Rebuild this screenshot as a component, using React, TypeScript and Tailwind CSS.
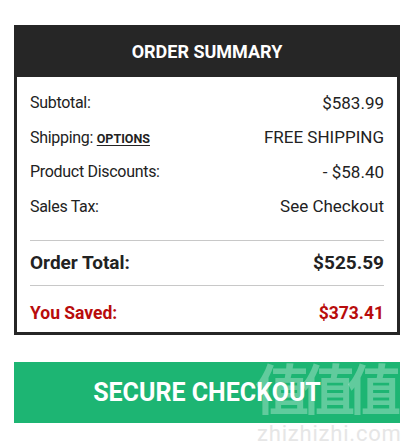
import React from "react";

const Row = ({ left, right }: { left: React.ReactNode; right: React.ReactNode }) => (
  <div className="flex h-[34.5px] items-center justify-between text-[#222]">
    <div className="text-[16px] tracking-[-0.3px]">{left}</div>
    <div className="text-[17px]">{right}</div>
  </div>
);

export default function App() {
  return (
    <div
      className="relative h-[447px] w-[407px] bg-white"
      style={{ fontFamily: "Roboto, 'Noto Sans', sans-serif" }}
    >
      <div className="ml-[14px] w-[386px] pt-[25px]">
        <div className="flex h-[52px] items-center justify-center bg-[#262626]">
          <span className="text-[18px] font-bold text-white">ORDER SUMMARY</span>
        </div>
        <div className="h-[258px] border-x-[3px] border-b-[3px] border-[#262626] px-[13px] pt-[9px]">
          <Row left="Subtotal:" right="$583.99" />
          <Row
            left={
              <span>
                Shipping:{" "}
                <span className="text-[12.5px] font-bold tracking-normal underline underline-offset-2">OPTIONS</span>
              </span>
            }
            right="FREE SHIPPING"
          />
          <Row left="Product Discounts:" right="- $58.40" />
          <Row left="Sales Tax:" right="See Checkout" />
          <div className="mt-[16px] h-px bg-[#c8c8c8]" />
          <div className="flex h-[44px] items-center justify-between text-[19px] font-bold text-[#222]">
            <span>Order Total:</span>
            <span>$525.59</span>
          </div>
          <div className="h-px bg-[#c8c8c8]" />
          <div className="mt-[9px] flex h-[36px] items-center justify-between text-[17.5px] font-bold text-[#b80c0c]">
            <span>You Saved:</span>
            <span>$373.41</span>
          </div>
        </div>
        <div className="mt-[27px] flex h-[61px] items-center justify-center bg-[#1db573]">
          <span className="text-[25px] font-bold text-white">SECURE CHECKOUT</span>
        </div>
      </div>
      <div
        className="pointer-events-none absolute left-[255px] top-[360px] text-[54px] font-bold leading-none tracking-[-8px] text-white/30"
        style={{ fontFamily: "'Noto Sans CJK SC', sans-serif" }}
      >
        值值值
      </div>
      <div className="pointer-events-none absolute left-[257px] top-[423px] text-[22px] leading-[22px] tracking-[0.8px] text-[#e6e6e6]">
        zhizhizhi.com
      </div>
    </div>
  );
}
